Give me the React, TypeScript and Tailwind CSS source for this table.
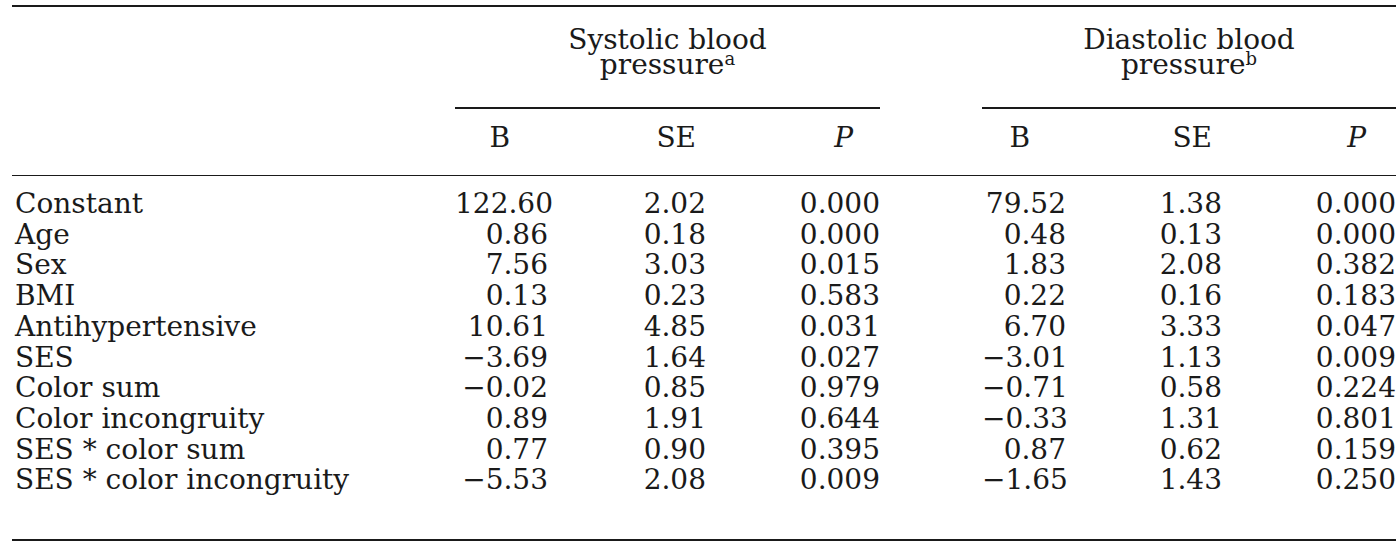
const rows: [string, string, string, string, string, string, string][] = [
  ['Constant', '122.60', '2.02', '0.000', '79.52', '1.38', '0.000'],
  ['Age', '0.86', '0.18', '0.000', '0.48', '0.13', '0.000'],
  ['Sex', '7.56', '3.03', '0.015', '1.83', '2.08', '0.382'],
  ['BMI', '0.13', '0.23', '0.583', '0.22', '0.16', '0.183'],
  ['Antihypertensive', '10.61', '4.85', '0.031', '6.70', '3.33', '0.047'],
  ['SES', '−3.69', '1.64', '0.027', '−3.01', '1.13', '0.009'],
  ['Color sum', '−0.02', '0.85', '0.979', '−0.71', '0.58', '0.224'],
  ['Color incongruity', '0.89', '1.91', '0.644', '−0.33', '1.31', '0.801'],
  ['SES * color sum', '0.77', '0.90', '0.395', '0.87', '0.62', '0.159'],
  ['SES * color incongruity', '−5.53', '2.08', '0.009', '−1.65', '1.43', '0.250'],
];

const grid = 'grid grid-cols-[443px_93px_158px_174px_102px_84px_156px_174px]';

export default function App() {
  return (
    <div className="w-[1396px] h-[545px] overflow-hidden bg-white text-[#1a1a1a] font-['DejaVu_Serif',serif] text-[28px]">
      <div className="ml-[12px] w-[1384px] pt-[5px]">
        <div className="border-t-2 border-[#1a1a1a]" />

        {/* spanner headings */}
        <div className={`${grid} pt-[20px]`}>
          <div className="col-start-2 col-span-3 border-b-2 border-[#1a1a1a] pb-[30px] text-center leading-[25px]">
            <div>Systolic blood</div>
            <div>
              pressure<sup className="text-[18px]">a</sup>
            </div>
          </div>
          <div className="col-start-6 col-span-3 border-b-2 border-[#1a1a1a] pb-[30px] text-center leading-[25px]">
            <div>Diastolic blood</div>
            <div>
              pressure<sup className="text-[18px]">b</sup>
            </div>
          </div>
        </div>

        {/* column headings */}
        <div className={`${grid} pt-[14px] pb-[22px] leading-[30px] border-b border-[#1a1a1a]`}>
          <div />
          <div className="text-right pr-[38px]">B</div>
          <div className="text-right pr-[10px]">SE</div>
          <div className="text-right pr-[27px] italic">P</div>
          <div />
          <div className="text-right pr-[36px]">B</div>
          <div className="text-right pr-[10px]">SE</div>
          <div className="text-right pr-[30px] italic">P</div>
        </div>

        {/* body */}
        <div className="pt-[13px] pb-[43px] border-b-2 border-[#1a1a1a]">
          {rows.map((r) => (
            <div key={r[0]} className={`${grid} leading-[30.7px]`}>
              <div className="pl-[3px] whitespace-nowrap">{r[0]}</div>
              <div className="text-right">{r[1]}</div>
              <div className="text-right">{r[2]}</div>
              <div className="text-right">{r[3]}</div>
              <div />
              <div className="text-right">{r[4]}</div>
              <div className="text-right">{r[5]}</div>
              <div className="text-right">{r[6]}</div>
            </div>
          ))}
        </div>
      </div>
    </div>
  );
}
